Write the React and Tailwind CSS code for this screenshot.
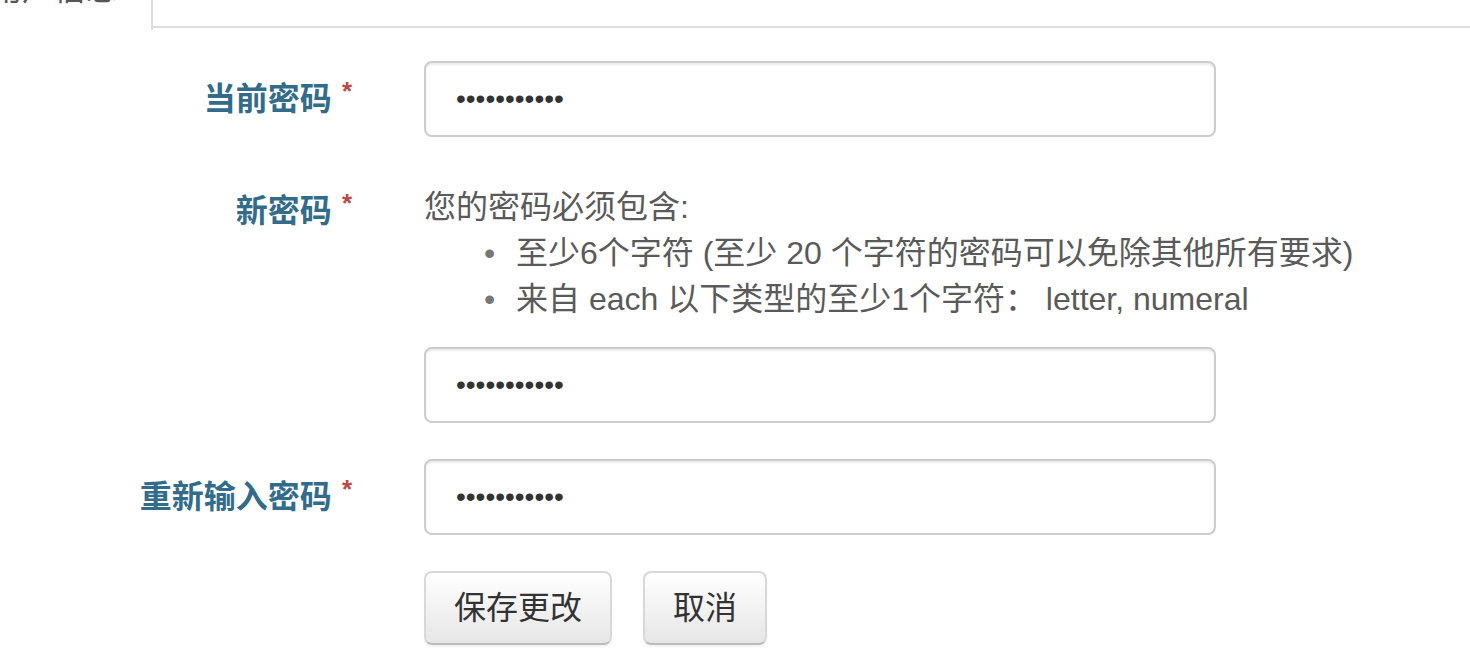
import { useState } from 'react';

const font = { fontFamily: '"Liberation Sans", "Noto Sans CJK SC", sans-serif' };

function Label({ children, className = '' }) {
  return (
    <div className={`w-[360px] shrink-0 flex justify-end items-start ${className}`}>
      <span className="text-[32px] font-bold text-[#336b8a] leading-[46px]">{children}</span>
      <span className="ml-[10px] mr-[8px] text-[26px] font-bold text-[#b94a48] leading-[30px] self-start">*</span>
    </div>
  );
}

function PasswordBox({ value, onChange }) {
  return (
    <input
      type="password"
      value={value}
      onChange={(e) => onChange(e.target.value)}
      className="w-[792px] h-[76px] px-[30px] text-[28px] text-[#333] border-2 border-[#cccccc] rounded-[8px] shadow-[inset_0_2px_2px_rgba(0,0,0,0.075)] outline-none"
    />
  );
}

const btn =
  'h-[74px] px-[28px] text-[32px] text-[#333] rounded-[8px] border-2 border-[#d8d8d8] border-b-[#bbbbbb] bg-gradient-to-b from-white to-[#e6e6e6] shadow-[0_2px_2px_rgba(0,0,0,0.05)]';

function App() {
  const [current, setCurrent] = useState('abcdefghijk');
  const [next, setNext] = useState('abcdefghijk');
  const [again, setAgain] = useState('abcdefghijk');

  return (
    <div className="w-full h-[652px] overflow-hidden bg-white" style={font}>
      {/* tabs */}
      <div className="flex h-[30px]">
        <div className="w-[153px] shrink-0 h-[30px] border-r-2 border-[#dddddd] overflow-hidden flex justify-end pr-[33px]">
          <span className="whitespace-nowrap text-[32px] leading-[32px] text-[#555] -mt-[27px]">用户信息</span>
        </div>
        <div className="flex-1 h-[28px] border-b-2 border-[#dddddd]"></div>
      </div>

      <form className="pt-[31px]" onSubmit={(e) => e.preventDefault()}>
        {/* current password */}
        <div className="flex items-center">
          <Label className="items-center">当前密码</Label>
          <div className="ml-[64px]">
            <PasswordBox value={current} onChange={setCurrent} />
          </div>
        </div>

        {/* new password */}
        <div className="flex mt-[47px]">
          <Label className="pt-[4px]">新密码</Label>
          <div className="ml-[64px]">
            <div className="text-[32px] leading-[46px] text-[#5a5a5a]">
              <div>您的密码必须包含:</div>
              <ul>
                <li className="flex">
                  <span className="w-[92px] pl-[60px] text-[#777]">•</span>
                  <span>至少6个字符 (至少 20 个字符的密码可以免除其他所有要求)</span>
                </li>
                <li className="flex">
                  <span className="w-[92px] pl-[60px] text-[#777]">•</span>
                  <span>来自 each 以下类型的至少1个字符： letter, numeral</span>
                </li>
              </ul>
            </div>
            <div className="mt-[25px]">
              <PasswordBox value={next} onChange={setNext} />
            </div>
          </div>
        </div>

        {/* confirm */}
        <div className="flex items-center mt-[36px]">
          <Label className="items-center">重新输入密码</Label>
          <div className="ml-[64px]">
            <PasswordBox value={again} onChange={setAgain} />
          </div>
        </div>

        {/* buttons */}
        <div className="flex mt-[36px] ml-[424px] gap-[31px]">
          <button type="submit" className={btn}>
            保存更改
          </button>
          <button type="button" className={btn}>
            取消
          </button>
        </div>
      </form>
    </div>
  );
}

export default App;
